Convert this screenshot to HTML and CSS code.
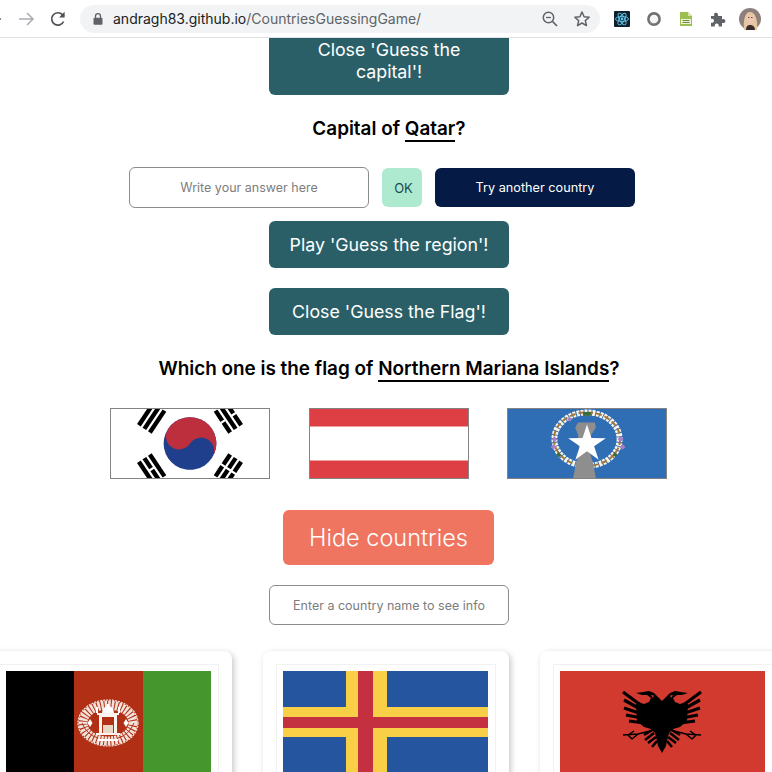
FILE: index.html
```html
<!DOCTYPE html>
<html lang="en">

<head>
  <meta charset="UTF-8">
  <meta name="viewport" content="width=device-width, initial-scale=1.0">
  <title>Countries Guessing Game</title>
  <link rel="stylesheet" href="styles.css">
</head>

<body>
  <!-- Browser toolbar -->
  <header class="toolbar">
    <svg class="nav-icon back" width="18" height="18" viewBox="0 0 18 18"><path d="M16 9H2M8 3L2 9l6 6" fill="none" stroke="#5f6368" stroke-width="1.6"/></svg>
    <svg class="nav-icon forward" width="18" height="18" viewBox="0 0 18 18"><path d="M2 9h14M10 3l6 6-6 6" fill="none" stroke="#a9acb0" stroke-width="1.5"/></svg>
    <svg class="nav-icon reload" width="18" height="18" viewBox="0 0 18 18"><path d="M14.6 11.5A6.2 6.2 0 1 1 13.4 4.6L15 6.2" fill="none" stroke="#4f5256" stroke-width="1.7"/><path d="M15.6 1.8v5.6h-5.6z" fill="#4f5256"/></svg>
    <div class="omnibox">
      <svg width="12" height="14" viewBox="0 0 12 14"><path d="M3.5 6V4.2a2.5 2.5 0 0 1 5 0V6" fill="none" stroke="#5f6368" stroke-width="1.3"/><rect x="1.5" y="5.8" width="9" height="7" rx="1" fill="#5f6368"/></svg>
      <span class="url"><b>andragh83.github.io</b>/CountriesGuessingGame/</span>
      <svg class="omni-zoom" width="18" height="18" viewBox="0 0 18 18"><circle cx="7.5" cy="7.5" r="5.2" fill="none" stroke="#5f6368" stroke-width="1.5"/><path d="M11.5 11.5L16 16" stroke="#5f6368" stroke-width="1.7"/><path d="M5 7.5h5" stroke="#5f6368" stroke-width="1.3"/></svg>
      <svg class="omni-star" width="18" height="18" viewBox="0 0 18 18"><path d="M9 2l2.1 4.7 5.1.5-3.9 3.4 1.2 5L9 13l-4.500 2.600 1.200-5L1.800 7.200l5.100-.5z" fill="none" stroke="#5f6368" stroke-width="1.5" stroke-linejoin="round"/></svg>
    </div>
    <div class="extensions">
      <svg width="16" height="16" viewBox="0 0 16 16"><rect width="16" height="16" rx="1" fill="#10202b"/><g fill="none" stroke="#61c8ee" stroke-width=".9"><ellipse cx="8" cy="8" rx="6.500" ry="2.600"/><ellipse cx="8" cy="8" rx="6.500" ry="2.600" transform="rotate(60 8 8)"/><ellipse cx="8" cy="8" rx="6.500" ry="2.600" transform="rotate(120 8 8)"/></g><circle cx="8" cy="8" r="1.400" fill="#61c8ee"/></svg>
      <svg width="16" height="16" viewBox="0 0 16 16"><circle cx="8" cy="8" r="5.600" fill="#f6f6f6" stroke="#707070" stroke-width="2.600"/><path d="M2.600 10a6 6 0 0 0 11-4.500 5.500 5.500 0 0 1-8.500 6z" fill="#a3a3a3"/></svg>
      <svg width="16" height="16" viewBox="0 0 16 16"><path d="M2 1h8l4 4v10H2z" fill="#9dbf4f"/><path d="M10 1l4 4h-4z" fill="#d7e6ad"/><rect x="3" y="8" width="10" height="5" fill="#eef4dc"/><path d="M4.500 9.500h7M4.500 11.500h7" stroke="#5c7a22" stroke-width=".9"/></svg>
      <svg width="16" height="16" viewBox="0 0 16 16"><path d="M1 5h3.500a2 2 0 1 1 3.500-1.300V5h4v3.500a2 2 0 1 1 1.300 3.500H12v3.500H8.500a2 2 0 1 0-3.500 0H1v-4a2 2 0 1 0 0-3.500z" fill="#5f6368"/></svg>
      <svg class="avatar" width="22" height="22" viewBox="0 0 22 22"><circle cx="11" cy="11" r="11" fill="#8d7f7c"/><path d="M5 22C4 12 6 4 11 4s8 7 7 18z" fill="#e5c79f"/><ellipse cx="11" cy="11.500" rx="3.500" ry="4.500" fill="#eec6b4"/><path d="M7 22c0-4 2-5 4-5s5 1 5 5z" fill="#3c2b2b"/><path d="M9 9.500h1.500M12 9.500h1.500" stroke="#4a3030" stroke-width=".8"/></svg>
    </div>
  </header>

  <main class="page">
    <button type="button" class="game-button first">Close 'Guess the capital'!</button>

    <h2 class="question capital">Capital of <span class="mark">Qatar</span>?</h2>

    <div class="answer-row">
      <input class="text-input answer" type="text" placeholder="Write your answer here">
      <button type="button" class="ok-button">OK</button>
      <button type="button" class="another-button">Try another country</button>
    </div>

    <button type="button" class="game-button play">Play 'Guess the region'!</button>
    <button type="button" class="game-button close-flag">Close 'Guess the Flag'!</button>

    <h2 class="question flag-question">Which one is the flag of <span class="mark">Northern Mariana Islands</span>?</h2>

    <div class="flag-row">
      <svg class="flag-option" viewBox="-36 -16 72 32" preserveAspectRatio="xMidYMid slice">
        <rect x="-36" y="-16" width="72" height="32" fill="#fff"/>
        <g transform="rotate(33.700)">
          <circle r="12" fill="#1f3f8c"/>
          <path d="M-12 0A12 12 0 0 1 12 0A6 6 0 0 0 0 0A6 6 0 0 1-12 0z" fill="#bd2f3d"/>
        </g>
        <g fill="#000">
          <g transform="rotate(-56.300) translate(0 -21)">
            <rect x="-6" y="-4" width="12" height="2"/><rect x="-6" y="-1" width="12" height="2"/><rect x="-6" y="2" width="12" height="2"/>
          </g>
          <g transform="rotate(56.300) translate(0 -21)">
            <rect x="-6" y="-4" width="5.500" height="2"/><rect x=".5" y="-4" width="5.500" height="2"/><rect x="-6" y="-1" width="12" height="2"/><rect x="-6" y="2" width="5.500" height="2"/><rect x=".5" y="2" width="5.500" height="2"/>
          </g>
          <g transform="rotate(-123.700) translate(0 -21)">
            <rect x="-6" y="-4" width="12" height="2"/><rect x="-6" y="-1" width="5.500" height="2"/><rect x=".5" y="-1" width="5.500" height="2"/><rect x="-6" y="2" width="12" height="2"/>
          </g>
          <g transform="rotate(123.700) translate(0 -21)">
            <rect x="-6" y="-4" width="5.500" height="2"/><rect x=".5" y="-4" width="5.500" height="2"/><rect x="-6" y="-1" width="5.500" height="2"/><rect x=".5" y="-1" width="5.500" height="2"/><rect x="-6" y="2" width="5.500" height="2"/><rect x=".5" y="2" width="5.500" height="2"/>
          </g>
        </g>
      </svg>

      <svg class="flag-option" viewBox="0 0 160 71" preserveAspectRatio="none">
        <rect width="160" height="71" fill="#dd3f45"/>
        <rect y="18" width="160" height="35" fill="#fff"/>
      </svg>

      <svg class="flag-option" viewBox="0 0 160 71" preserveAspectRatio="none">
        <rect width="160" height="71" fill="#2f6db5"/>
        <ellipse cx="80" cy="31" rx="33" ry="27.500" fill="none" stroke="#f7f4ea" stroke-width="6" stroke-dasharray="3 1"/>
        <ellipse cx="80" cy="31" rx="33.500" ry="27.500" fill="none" stroke="#a5763a" stroke-width="2" stroke-dasharray="6 3"/>
        <path d="M47 28l3 3-3 3-3-3zM46 36l3 3-3 3-3-3zM114 28l3 3-3 3-3-3zM116 36l3 3-3 3-3-3zM62 8l3 2-2 3-3-2z" fill="#a77fc4"/>
        <path d="M76 3h8v4h-8zM51 44l3 3-2 3-3-3zM108 44l3 3-2 3-3-3z" fill="#3f6b3a"/>
        <path d="M71 14h17l1 5-5 8-1 18 3 10 3 16H66l3-16 3-10-1-18-3-8z" fill="#8e8e8e"/>
        <path d="M80 16L84.500 29.800 99 30 87.200 38.300 91.800 52.200 80 43.600 68.200 52.200 72.800 38.300 61 30 75.500 29.800z" fill="#fff"/>
      </svg>
    </div>

    <button type="button" class="hide-button">Hide countries</button>

    <input class="text-input search" type="text" placeholder="Enter a country name to see info">

    <div class="card-row">
      <article class="card">
        <div class="card-frame">
          <svg class="card-flag" viewBox="0 0 205 137">
            <rect width="68" height="137" fill="#000"/>
            <rect x="68" width="69" height="137" fill="#b02f15"/>
            <rect x="137" width="68" height="137" fill="#44962d"/>
            <!-- emblem -->
            <ellipse cx="102" cy="52" rx="25" ry="18" fill="none" stroke="#f3e2da" stroke-width="9" stroke-dasharray="2.500 1"/>
            <ellipse cx="102" cy="52" rx="30" ry="23" fill="none" stroke="#f3e2da" stroke-width="1.200" stroke-dasharray="2 1"/>
            <path d="M76 52q5 12 16 15M128 52q-5 12-16 15" fill="none" stroke="#b02f15" stroke-width="1"/>
            <path d="M91 42h22v2h-2v18h3v2H90v-2h3V44h-2z" fill="#fbf3ee"/>
            <path d="M96 46h12v16H96z" fill="#b02f15"/>
            <path d="M97 54h10v8H97z" fill="#e9d6c4"/>
            <path d="M96 42a6 7 0 0 1 12 0z" fill="#fff"/>
            <path d="M101 33h2v3h-2zM90 36h2v6h-2zM112 36h2v6h-2z" fill="#fff"/>
            <path d="M84 48l2.500 4-2.500 4-2.500-4zM120 48l2.500 4-2.500 4-2.500-4z" fill="#fff"/>
            <path d="M92 68h20v2H92z" fill="#fff"/>
          </svg>
        </div>
      </article>

      <article class="card">
        <div class="card-frame">
          <svg class="card-flag" viewBox="0 0 205 137">
            <rect width="205" height="137" fill="#26559f"/>
            <rect x="63" width="41" height="137" fill="#f8cf46"/>
            <rect y="36" width="205" height="30" fill="#f8cf46"/>
            <rect x="75" width="15" height="137" fill="#c4303f"/>
            <rect y="46" width="205" height="11" fill="#c4303f"/>
          </svg>
        </div>
      </article>

      <article class="card">
        <div class="card-frame">
          <svg class="card-flag" viewBox="0 0 205 137">
            <rect width="205" height="137" fill="#d33a2f"/>
            <g transform="translate(102 0)">
              <g id="eagle-half">
                <!-- body, neck and head -->
                <path d="M0 30L3 27 8 22 13 20 19 21 26 22 20 24 15 24 11 27 13 31 18 33 24 31 26 33 25 50 18 56 11 58 7 62 5 70 4 75 0 82z" fill="#000"/>
                <path d="M8 24.500l3-.5-2 3z" fill="#d33a2f"/>
                <!-- wing feathers -->
                <path d="M20 35L39 21M20 39L38 29M20 43L38 37M20 47L36 44M18 52L33 50" fill="none" stroke="#000" stroke-width="3.200"/>
                <!-- lower feathers and tail -->
                <path d="M8 58L18 64M8 62L17 69M6 66L14 72M5 70L10 76" fill="none" stroke="#000" stroke-width="2.600"/>
                <!-- leg and claw -->
                <path d="M12 60L24 63 39 64M28 60L34 64 30 68M24 63L30 68" fill="none" stroke="#000" stroke-width="1.500"/>
              </g>
              <use href="#eagle-half" transform="scale(-1 1)"/>
            </g>
          </svg>
        </div>
      </article>
    </div>
  </main>
</body>

</html>
```

FILE: styles.css
```css
* {
  box-sizing: border-box;
}

html,
body {
  height: 100%;
}

body {
  margin: 0;
  background-color: #fff;
  font-family: Inter, Arial, sans-serif;
  color: #000;
  overflow: hidden;
}

/* Browser toolbar */
.toolbar {
  height: 38px;
  display: flex;
  align-items: center;
  background-color: #fff;
  border-bottom: 1px solid #dfe1e5;
  padding-left: 17px;
}

.nav-icon {
  flex: none;
}

.back {
  margin-left: -32px;
  margin-right: 14px;
}

.forward {
  margin-right: 14px;
}

.reload {
  margin-right: 13px;
}

.omnibox {
  width: 520px;
  height: 28px;
  flex: none;
  display: flex;
  align-items: center;
  padding-left: 12px;
  padding-right: 9px;
  border-radius: 14px;
  background-color: #f1f3f4;
}

.url {
  margin-left: 9px;
  font-size: 14px;
  color: #5f6368;
  white-space: nowrap;
}

.url b {
  font-weight: 400;
  color: #202124;
}

.omni-zoom {
  margin-left: auto;
  margin-right: 14px;
}

.extensions {
  display: flex;
  align-items: center;
  gap: 16px;
  margin-left: 14px;
}

.avatar {
  margin-left: -3px;
}

/* Game page */
.page {
  height: 734px;
  overflow: hidden;
  padding-left: 6px;
  display: flex;
  flex-direction: column;
  align-items: center;
}

.game-button {
  flex: none;
  width: 240px;
  height: 47px;
  padding: 0 10px;
  border: none;
  border-radius: 6px;
  background-color: #2a5f68;
  color: #fff;
  font-family: inherit;
  font-size: 17.8px;
  line-height: 22px;
}

.game-button.first {
  height: 57px;
  padding: 0 20px 12px;
  border-radius: 0 0 6px 6px;
}

.game-button.play {
  margin-top: 13px;
}

.game-button.close-flag {
  margin-top: 20px;
}

.question {
  margin: 0;
  font-size: 18.9px;
  font-weight: 600;
  line-height: 24px;
  white-space: nowrap;
}

.question.capital {
  margin-top: 22px;
}

.question.flag-question {
  margin-top: 22px;
}

.mark {
  display: inline-block;
  border-bottom: 2px solid #000;
  line-height: 23px;
}

.answer-row {
  display: flex;
  align-items: center;
  gap: 13px;
  margin-top: 25px;
  margin-right: 14px;
}

.text-input {
  width: 240px;
  height: 41px;
  border: 1px solid #8c8c8c;
  border-radius: 6px;
  background-color: #fff;
  font-family: inherit;
  font-size: 12.5px;
  text-align: center;
}

.text-input::placeholder {
  color: #7d7d7d;
}

.ok-button {
  width: 40px;
  height: 39px;
  padding: 0 0 0 3px;
  border: none;
  border-radius: 6px;
  background-color: #aeeacf;
  color: #1f4a4f;
  font-family: inherit;
  font-size: 13px;
}

.another-button {
  width: 200px;
  height: 39px;
  border: none;
  border-radius: 6px;
  background-color: #051a44;
  color: #fff;
  font-family: inherit;
  font-size: 12.7px;
}

.flag-row {
  display: flex;
  margin-top: 26px;
  margin-right: 1px;
}

.flag-option {
  display: block;
  width: 160px;
  height: 71px;
  border: 1px solid #838383;
}

.flag-option + .flag-option {
  margin-left: 39px;
}

.flag-option + .flag-option + .flag-option {
  margin-left: 38px;
}

.hide-button {
  flex: none;
  width: 211px;
  height: 55px;
  margin-top: 31px;
  margin-right: 1px;
  border: none;
  border-radius: 6px;
  background-color: #f07560;
  color: #fff;
  font-family: inherit;
  font-size: 23.5px;
  font-weight: 300;
}

.search {
  flex: none;
  margin-top: 20px;
  height: 40px;
}

.card-row {
  align-self: flex-start;
  display: flex;
  gap: 31px;
  margin-top: 26px;
  margin-left: -20px;
}

.card {
  flex: none;
  width: 246px;
  height: 240px;
  padding: 13px;
  border-radius: 8px;
  background-color: #fff;
  box-shadow: 2px 2px 6px rgba(0, 0, 0, 0.22);
}

.card-frame {
  padding: 6px;
  border: 1px solid #f1f1f1;
}

.card-flag {
  display: block;
  width: 205px;
  height: 137px;
}
```
